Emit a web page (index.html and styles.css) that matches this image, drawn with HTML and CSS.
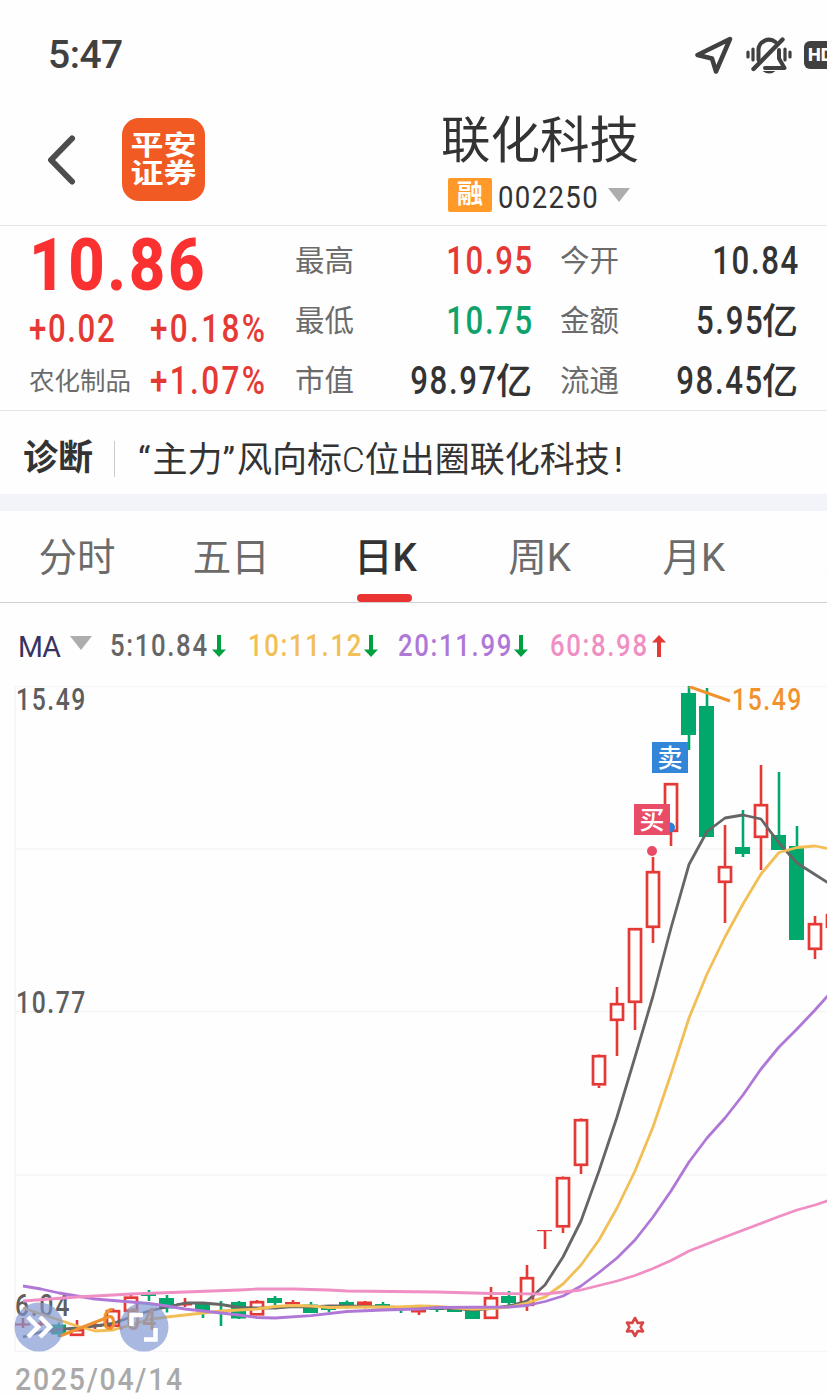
FILE: index.html
```
<!DOCTYPE html>
<html lang="zh-CN">
<head>
  <meta charset="UTF-8">
  <meta name="viewport" content="width=device-width, initial-scale=1.0">
  <title>联化科技 002250</title>
  <link rel="stylesheet" href="styles.css">
</head>
<body>
  <div class="app">
    <div class="status-bar">
      <span class="clock">5:47</span>
      <div class="status-icons">
        <svg class="icon-location" width="38" height="38" viewBox="0 0 38 38">
          <path d="M35 3 L2.500 19 L17 22.500 L21 35.500 Z" />
        </svg>
        <svg class="icon-mute" width="46" height="40" viewBox="0 0 46 40">
          <path d="M2 17v5M7 14v11M39 14v11M44 17v5" />
          <path d="M12.500 25V15.500a10.500 10.500 0 0 1 17-8.500M33 15v8.500l5.500 9.500H19" stroke-width="4" />
          <path d="M7.500 34 36.500 4.500" stroke-width="4.400" />
          <path class="clapper" d="M16.500 36h13q-6 5-13 0z" />
        </svg>
        <span class="hd">HD</span>
      </div>
    </div>

    <div class="header">
      <svg class="back" width="30" height="52" viewBox="0 0 30 52">
        <path d="M25 4.500 4 26 25 47.500" />
      </svg>
      <div class="logo"><span>平安</span><span>证券</span></div>
      <div class="stock">
        <h1>联化科技</h1>
        <div class="code">
          <span class="tag">融</span>
          <span class="num">002250</span>
          <i class="caret"></i>
        </div>
      </div>
    </div>

    <div class="quote">
      <div class="price-block">
        <div class="price"><span class="num">10.86</span></div>
        <div class="change"><span class="num">+0.02</span><span class="num pct">+0.18%</span></div>
        <div class="sector"><span class="name">农化制品</span><span class="num pct">+1.07%</span></div>
      </div>
      <div class="stats">
        <span class="label">最高</span><span class="value up"><b class="num">10.95</b></span>
        <span class="label">今开</span><span class="value"><b class="num">10.84</b></span>
        <span class="label">最低</span><span class="value down"><b class="num">10.75</b></span>
        <span class="label">金额</span><span class="value"><b class="num">5.95</b>亿</span>
        <span class="label">市值</span><span class="value"><b class="num">98.97</b>亿</span>
        <span class="label">流通</span><span class="value"><b class="num">98.45</b>亿</span>
      </div>
    </div>

    <div class="diagnose">
      <strong>诊断</strong>
      <p><span class="quot">“</span>主力<span class="quot">”</span>风向标<span class="latin">C</span>位出圈联化科技<span class="mark">!</span></p>
    </div>

    <div class="tabs">
      <span class="tab">分时</span>
      <span class="tab">五日</span>
      <span class="tab active">日<em>K</em></span>
      <span class="tab">周<em>K</em></span>
      <span class="tab">月<em>K</em></span>
      <span class="tab more">更多</span>
    </div>

    <div class="ma-row">
      <span class="ma-name">MA</span>
      <i class="caret"></i>
      <div class="ma ma5"><span class="num">5:10.84</span><svg class="fall" width="14" height="22" viewBox="0 0 14 22"><path d="M5 0h4v14.500h5L7 22 0 14.500h5z" /></svg></div>
      <div class="ma ma10"><span class="num">10:11.12</span><svg class="fall" width="14" height="22" viewBox="0 0 14 22"><path d="M5 0h4v14.500h5L7 22 0 14.500h5z" /></svg></div>
      <div class="ma ma20"><span class="num">20:11.99</span><svg class="fall" width="14" height="22" viewBox="0 0 14 22"><path d="M5 0h4v14.500h5L7 22 0 14.500h5z" /></svg></div>
      <div class="ma ma60"><span class="num">60:8.98</span><svg class="rise" width="14" height="22" viewBox="0 0 14 22"><path d="M5 22h4V7.500h5L7 0 0 7.500h5z" /></svg></div>
    </div>

    <svg class="chart" width="827" height="709" viewBox="0 686 827 709">
      <path class="grid" d="M15 686.500H827M15 849H827M15 1011.500H827M15 1175H827M15 1351.500H827M15 686V1352" />
      <g class="axis">
        <text x="16" y="710" textLength="71" lengthAdjust="spacingAndGlyphs">15.49</text>
        <text x="16" y="1013" textLength="71" lengthAdjust="spacingAndGlyphs">10.77</text>
        <text x="15" y="1316" textLength="56" lengthAdjust="spacingAndGlyphs">6.04</text>
      </g>
      <g id="candles"></g>
      <g id="lines"></g>

      <!-- highest / lowest price pointers -->
      <path class="pointer" d="M689 686.500 730 701M60 1336 106 1318" />
      <g class="extreme">
        <text x="732" y="710" textLength="71" lengthAdjust="spacingAndGlyphs">15.49</text>
        <text x="102" y="1330" textLength="56" lengthAdjust="spacingAndGlyphs">6.04</text>
      </g>

      <!-- trades -->
      <circle cx="670" cy="827.500" r="5" fill="#2f7fd6" />
      <circle cx="652" cy="851" r="5" fill="#e84c66" />
      <rect x="652" y="742" width="36" height="31" fill="#3385d8" />
      <text class="trade" x="670" y="767">卖</text>
      <rect x="634" y="804" width="36" height="31" fill="#e84c66" />
      <text class="trade" x="652" y="829">买</text>

      <path class="event" d="M635 1318 637.800 1323 643 1322.600 640.600 1327 643 1331.400 637.800 1331 635 1336 632.200 1331 627 1331.400 629.400 1327 627 1322.600 632.200 1323z" />

      <circle class="tool" cx="39" cy="1327" r="24.500" />
      <circle class="tool" cx="144" cy="1327" r="24.500" />
      <path class="tool-icon" d="M28 1317 38 1327 28 1337M40 1317 50 1327 40 1337M131.500 1326V1315H143M144 1339.500H155.500V1328" />

      <text class="date" x="15" y="1390" textLength="169" lengthAdjust="spacingAndGlyphs">2025/04/14</text>
    </svg>
  </div>

  <script>
    // x step is 18px, first candle at x = 23
    // [high, body top, body bottom, low, type]   u = hollow red, r = flat red, d = green
    const candles = [
      [1318, 1323.5, 1325.5, 1328, 'r'],
      [1319, 1322.5, 1325, 1326, 'r'],
      [1322.5, 1324.5, 1334.5, 1337, 'd'],
      [1320, 1329, 1336, 1336, 'u'],
      [1323, 1324, 1327, 1329, 'r'],
      [1308.5, 1310, 1327, 1327, 'u'],
      [1295, 1296.5, 1312, 1312, 'u'],
      [1290, 1294, 1296, 1301, 'd'],
      [1295, 1298, 1308.5, 1312.5, 'd'],
      [1298, 1303, 1305.5, 1307, 'r'],
      [1303, 1304, 1311, 1318, 'd'],
      [1301, 1311, 1312.5, 1326, 'd'],
      [1301, 1302, 1318.5, 1319, 'd'],
      [1300, 1301, 1315.5, 1315.5, 'u'],
      [1296, 1298, 1303, 1306, 'd'],
      [1300, 1302, 1304.5, 1306, 'r'],
      [1302, 1304.5, 1313, 1313, 'd'],
      [1306, 1308, 1310, 1312, 'd'],
      [1300.5, 1302, 1306, 1308.5, 'd'],
      [1301, 1301.5, 1306, 1308.5, 'r'],
      [1302, 1304, 1306.5, 1308, 'd'],
      [1306, 1308, 1310, 1313, 'd'],
      [1307, 1308.5, 1312.5, 1315, 'r'],
      [1305, 1308, 1310, 1312, 'd'],
      [1307, 1309, 1312, 1312, 'd'],
      [1309, 1310, 1319, 1319, 'd'],
      [1287, 1297, 1319, 1319, 'u'],
      [1291, 1296, 1303, 1305, 'd'],
      [1265, 1277, 1306, 1311, 'u'],
      [1230, 1230, 1231.2, 1249, 'r'],
      [1176.5, 1177, 1227.5, 1233, 'u'],
      [1118.5, 1119, 1166, 1174, 'u'],
      [1054.5, 1055, 1085.5, 1088, 'u'],
      [987, 1003, 1021, 1056, 'u'],
      [928, 928, 1003, 1030, 'u'],
      [857, 871, 928, 943, 'u'],
      [783, 783, 832, 846, 'u'],
      [686, 693, 735, 750, 'd'],
      [688, 706, 837, 837, 'd'],
      [825, 866, 883, 923, 'u'],
      [810, 847, 854, 857, 'd'],
      [765, 804, 838, 870, 'u'],
      [772, 835, 850, 850, 'd'],
      [826, 846, 940, 940, 'd'],
      [916, 923, 950, 959, 'u'],
      [914, 914, 928, 928, 'u']
    ];

    let html = '';
    candles.forEach(([high, top, bottom, low, type], i) => {
      const x = 23 + i * 18;
      const color = type === 'd' ? 'green' : 'red';
      if (type === 'u') {
        html += `<path class="wick red" d="M${x} ${high}V${top}M${x} ${bottom}V${low}"/>`;
        html += `<rect class="hollow" x="${x - 6}" y="${top + 1.2}" width="12" height="${bottom - top - 2.4}"/>`;
      } else {
        html += `<path class="wick ${color}" d="M${x} ${high}V${low}"/>`;
        html += `<rect class="solid ${color}" x="${x - 8}" y="${top}" width="15" height="${bottom - top}"/>`;
      }
    });
    document.getElementById('candles').innerHTML = html;

    // moving averages as [x, y] pairs
    const averages = {
      'line5': '23,1337 41,1332 59,1329.5 77,1328 95,1326 113,1323.5 131,1317 149,1311 167,1307 185,1303 203,1303 221,1304.5 239,1307.5 257,1308 275,1308 293,1306.5 311,1307 329,1306 347,1306 365,1306.5 383,1307 401,1307.5 419,1307 437,1308 455,1308.5 473,1310 491,1308.5 509,1306 527,1301 545,1285 563,1257 581,1221 599,1171 617,1117 635,1057 653,996 671,928 689,864.5 707,831.5 725,818 743,815 761,819 779,843 797,863 815,874.5 833,886',
      'line10': '23,1308 41,1314 59,1320 77,1326 95,1331 113,1330 131,1325 149,1319.5 167,1317 185,1315 203,1313 221,1311 239,1310 257,1309 275,1306.5 293,1305.5 311,1306 329,1307.5 365,1307 401,1307 419,1306 437,1306.5 455,1308 473,1309 491,1308.5 509,1307 527,1303 545,1297 563,1284 581,1265 599,1240 617,1208 635,1171 653,1127 671,1074 689,1018 707,974 725,937 743,904 761,874 779,852.5 797,847.5 815,846 833,849.5',
      'line20': '23,1286 41,1289 59,1293 77,1296 95,1299 131,1302 149,1303.5 167,1306 185,1309 203,1311 221,1313 239,1315 257,1317.5 275,1318 311,1315.7 347,1311.5 383,1310 419,1309 437,1307.5 509,1307 527,1305.5 545,1301.5 563,1296 581,1286 599,1272.5 617,1258 635,1240 653,1217 671,1191 689,1162 707,1138 725,1118 743,1095 761,1069 779,1047 797,1029 815,1010 833,990',
      'line60': '23,1301 77,1297 131,1294 185,1292 239,1290 257,1289 293,1289 329,1290 347,1291 437,1292 491,1293.5 545,1294 563,1292 581,1290 617,1281 635,1275.5 653,1268.5 671,1260.5 689,1251 725,1237 779,1216.5 797,1210 815,1205 833,1199'
    };
    document.getElementById('lines').innerHTML = Object.keys(averages)
      .map(name => `<polyline class="line ${name}" points="${averages[name]}"/>`).join('');
  </script>
</body>
</html>
```
FILE: styles.css
```
* {
  margin: 0;
  padding: 0;
  box-sizing: border-box;
}

body {
  font-family: Roboto, 'Noto Sans CJK SC', sans-serif;
  background-color: #fefefe;
  color: #333;
  overflow: hidden;
}

.app {
  width: 827px;
  height: 1395px;
  overflow: hidden;
}

.num {
  display: inline-block;
  font-weight: 500;
  letter-spacing: 2px;
  transform: scaleX(0.82);
  transform-origin: left center;
}

.caret {
  border: 11px solid transparent;
  border-top: 14px solid #adadad;
  border-bottom: 0;
}

/* Status bar */
.status-bar {
  height: 92px;
  padding: 17px 0 0 48px;
  display: flex;
  justify-content: space-between;
  align-items: center;
}

.clock {
  font-size: 39px;
  font-weight: 500;
  color: #404040;
  letter-spacing: -0.5px;
}

.status-icons {
  width: 132px;
  display: flex;
  align-items: center;
  gap: 13px;
}

.status-icons svg {
  flex: none;
  fill: none;
  stroke: #404040;
  stroke-width: 4.5;
  stroke-linejoin: round;
  stroke-linecap: round;
}

.status-icons .icon-mute {
  stroke-width: 3.2;
}

.icon-mute .clapper {
  fill: #404040;
  stroke: none;
}

.hd {
  flex: none;
  width: 46px;
  height: 28px;
  margin-left: -1px;
  padding-left: 4px;
  border-radius: 6px;
  background-color: #404040;
  color: #fff;
  font: 800 17px/28px Inter, sans-serif;
}

/* Header */
.header {
  height: 134px;
  padding-left: 47px;
  display: flex;
  border-bottom: 1px solid #e6e6e6;
}

.back {
  margin: 42px 45px 0 0;
  fill: none;
  stroke: #4d4d4d;
  stroke-width: 6;
  stroke-linecap: round;
  stroke-linejoin: round;
}

.logo {
  width: 83px;
  height: 83px;
  margin-top: 26px;
  padding-top: 14px;
  border-radius: 17px;
  background-color: #f15a22;
  color: #fff;
  display: flex;
  flex-direction: column;
  align-items: center;
  font-size: 33px;
  font-weight: 700;
  line-height: 28px;
}

.logo span {
  transform: scaleY(0.82);
}

.stock {
  width: 200px;
  margin: 19px 0 0 236px;
}

.stock h1 {
  font-size: 49.5px;
  font-weight: 400;
  line-height: 60px;
  white-space: nowrap;
}

.code {
  display: flex;
  align-items: center;
  margin: 5px 0 0 7px;
  font-size: 32px;
  line-height: 34px;
}

.tag {
  width: 44px;
  height: 34px;
  margin-right: 6px;
  border-radius: 2px;
  background-color: #ff9a28;
  color: #fff;
  font-size: 26px;
  font-weight: 700;
  line-height: 32px;
  text-align: center;
}

.code .num {
  width: 110px;
  padding-top: 4px;
  font-weight: 400;
  letter-spacing: 1.6px;
  transform: scaleX(0.86);
}

/* Quote */
.quote {
  height: 185px;
  display: flex;
  border-bottom: 1px solid #e6e6e6;
}

.price-block {
  width: 295px;
  padding-left: 29px;
  color: #e53935;
}

.price {
  height: 77px;
  padding-top: 2px;
  font-size: 72px;
  line-height: 76px;
  color: #fb3030;
}

.price .num {
  font-weight: 800;
  letter-spacing: 3px;
  transform: scaleX(0.88);
}

.change,
.sector {
  display: flex;
  height: 52px;
  font-size: 38px;
  line-height: 52px;
}

.change .num:first-child,
.sector .name {
  width: 121px;
  flex: none;
}

.price-block .pct {
  letter-spacing: 2.8px;
  transform: scaleX(0.83);
}

.sector .name {
  color: #6b6b6b;
  font-size: 25.5px;
}

.stats {
  display: grid;
  grid-template-columns: 66px 171px 95px 171px;
  grid-auto-rows: 60px;
  padding-top: 5px;
  line-height: 60px;
}

.label {
  font-size: 29.5px;
  color: #6b6b6b;
}

.label:nth-child(4n + 3) {
  padding-left: 28px;
}

.value {
  text-align: right;
  font-size: 36px;
  font-weight: 500;
}

.value .num {
  margin-right: -2px;
  font-size: 38px;
  transform-origin: right center;
}

.up {
  color: #e53935;
}

.down {
  color: #0fa36b;
}

/* Diagnosis banner */
.diagnose {
  height: 100px;
  display: flex;
  align-items: center;
  padding: 13px 0 0 23px;
  border-bottom: 17px solid #f3f4f9;
  font-size: 35px;
  line-height: 50px;
}

.diagnose strong {
  padding-right: 21px;
  border-right: 1px solid #ccc;
  line-height: 36px;
}

.diagnose p {
  margin-left: 23px;
  padding-top: 3px;
  white-space: nowrap;
}

.quot {
  padding-right: 2px;
}

.latin {
  font-weight: 300;
}

.mark {
  padding-left: 4px;
}

/* Tabs */
.tabs {
  height: 92px;
  display: flex;
  border-bottom: 1px solid #d0d0d0;
  font-size: 38.5px;
  line-height: 93px;
  color: #6b6b6b;
}

.tab {
  position: relative;
  flex: none;
  width: 154.2px;
  text-align: center;
}

.tab em {
  font-style: normal;
}

.tab.active {
  color: #333;
  font-weight: 500;
}

.tab.active::after {
  content: '';
  position: absolute;
  left: 49px;
  bottom: 0;
  width: 55px;
  height: 8px;
  border-radius: 4px;
  background-color: #ea3434;
}

.tab.more {
  text-align: left;
  padding-left: 54px;
}

/* MA legend */
.ma-row {
  height: 83px;
  display: flex;
  align-items: center;
  padding: 2px 0 0 18px;
  font-size: 31px;
}

.ma-name {
  width: 52px;
  padding-top: 2px;
  color: #39335f;
  font-size: 30px;
  letter-spacing: -1px;
  transform: scaleX(0.95);
  transform-origin: left center;
}

.ma-row .caret {
  margin: -5px 18px 0 0;
}

.ma {
  display: flex;
  align-items: center;
  flex: none;
}

.ma .num {
  flex: none;
  width: 102px;
  transform: scaleX(0.83);
}

.ma5 {
  width: 138px;
  color: #666;
}

.ma10 {
  width: 150px;
  color: #f2bf56;
}

.ma20 {
  width: 152px;
  color: #b078d6;
}

.ma60 {
  color: #ef8fc4;
}

.ma10 .num,
.ma20 .num {
  width: 116px;
}

.fall {
  fill: #00a040;
}

.rise {
  fill: #e53935;
}

/* Chart */
.chart {
  display: block;
}

.grid {
  fill: none;
  stroke: #f5f5f5;
  stroke-width: 1.5;
}

.axis {
  font-size: 31px;
  font-weight: 500;
  letter-spacing: 2px;
  fill: #5e5e5e;
}

.wick {
  stroke-width: 2.6;
}

.wick.red {
  stroke: #e53935;
}

.wick.green {
  stroke: #00a96b;
}

.hollow {
  fill: none;
  stroke: #e53935;
  stroke-width: 2.7;
}

.solid.red {
  fill: #e53935;
}

.solid.green {
  fill: #00a96b;
}

.line {
  fill: none;
  stroke-width: 2.8;
  stroke-linejoin: round;
}

.line5 {
  stroke: #666;
}

.line10 {
  stroke: #f2bf56;
}

.line20 {
  stroke: #b078d6;
}

.line60 {
  stroke: #ef8fc4;
}

.pointer {
  stroke: #f0922e;
  stroke-width: 3;
}

.extreme {
  font-size: 31px;
  font-weight: 500;
  letter-spacing: 2px;
  fill: #f0922e;
}

.trade {
  font-size: 25px;
  font-weight: 500;
  fill: #fff;
  text-anchor: middle;
}

.event {
  fill: none;
  stroke: #d94444;
  stroke-width: 2.6;
  stroke-linejoin: round;
}

.tool {
  fill: #7f96d2;
  fill-opacity: 0.68;
}

.tool-icon {
  fill: none;
  stroke: #fff;
  stroke-width: 4.5;
}

.date {
  font-size: 32px;
  font-weight: 500;
  letter-spacing: 2px;
  fill: #a9a9a9;
}
```
